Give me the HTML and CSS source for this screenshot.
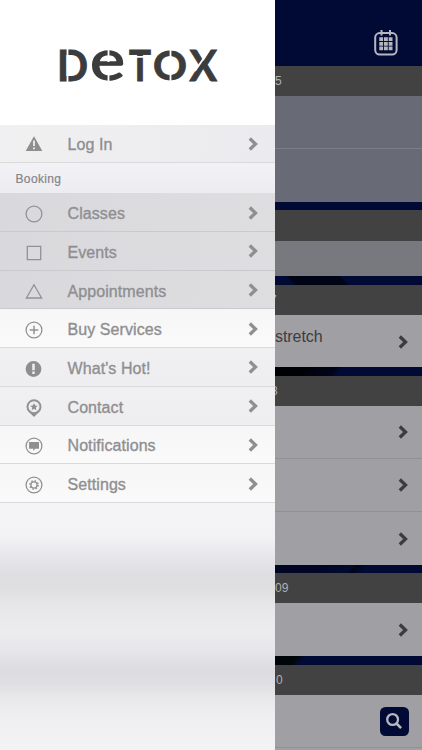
FILE: index.html
```html
<!DOCTYPE html>
<html lang="en">
<head>
<meta charset="utf-8">
<title>Detox</title>
<link rel="stylesheet" href="styles.css">
</head>
<body>
<svg class="defs" width="0" height="0">
  <symbol id="chev" viewBox="0 0 10 14"><path d="M1.8 1.5 7.5 7 1.8 12.5" fill="none" stroke="currentColor" stroke-width="3.3"/></symbol>
</svg>
<div class="app">
  <aside class="drawer">
    <div class="brand">
      <svg class="logo" width="160" height="34" viewBox="0 0 160 34">
        <g class="letters">
          <text x="-2" y="31.5" font-size="42" textLength="31" lengthAdjust="spacingAndGlyphs">D</text>
          <text class="wide-e" x="31" y="31" font-size="56" textLength="35" lengthAdjust="spacingAndGlyphs">e</text>
          <text x="70" y="31.5" font-size="42" textLength="22" lengthAdjust="spacingAndGlyphs">T</text>
          <text x="94" y="31" font-size="41" textLength="34" lengthAdjust="spacingAndGlyphs">O</text>
          <text x="130.5" y="31.5" font-size="42" textLength="27.5" lengthAdjust="spacingAndGlyphs">X</text>
        </g>
        <path class="cuts" d="M8.5 0V34M49.5 0V13M49.5 22V34M70 7.8H92M111.5 0V34M136 22 151 0"/>
      </svg>
    </div>
    <nav class="menu">
      <a class="item login">
        <svg class="icon" viewBox="0 0 18 18"><path class="solid" d="M9 1.2 17.3 16H.7Z"/><path d="M9 5.5V11M9 12.4V14.2" stroke="#eee" stroke-width="1.8"/></svg>
        <span class="label">Log In</span><svg class="chev"><use href="#chev"/></svg>
      </a>
      <div class="section">Booking</div>
      <a class="item shaded">
        <svg class="icon" viewBox="0 0 18 18"><circle cx="9" cy="9" r="7.9"/></svg>
        <span class="label">Classes</span><svg class="chev"><use href="#chev"/></svg>
      </a>
      <a class="item shaded">
        <svg class="icon" viewBox="0 0 18 18"><path d="M2.3 2.3H15.7V15.7H2.3Z"/></svg>
        <span class="label">Events</span><svg class="chev"><use href="#chev"/></svg>
      </a>
      <a class="item shaded">
        <svg class="icon" viewBox="0 0 18 18"><path d="M9 1.7 16.6 15H1.4Z"/></svg>
        <span class="label">Appointments</span><svg class="chev"><use href="#chev"/></svg>
      </a>
      <a class="item">
        <svg class="icon" viewBox="0 0 18 18"><circle cx="9" cy="9" r="7.9"/><path d="M9 4.7V13.3M4.7 9H13.3" stroke-width="1.5"/></svg>
        <span class="label">Buy Services</span><svg class="chev"><use href="#chev"/></svg>
      </a>
      <a class="item grey">
        <svg class="icon" viewBox="0 0 18 18"><circle class="solid" cx="8.5" cy="9" r="7.9"/><path d="M8.5 3.7V10.3M8.5 11.6V14" stroke="#eee" stroke-width="2.5"/></svg>
        <span class="label">What's Hot!</span><svg class="chev"><use href="#chev"/></svg>
      </a>
      <a class="item grey">
        <svg class="icon" viewBox="0 0 18 18"><path class="solid" d="M3.6 12.5 9 18.1 14.4 12.5Z"/><circle class="pin" cx="9" cy="7.7" r="6.5"/><path class="solid" d="m9 4 1.1 2.5 2.7.2-2.1 1.8.7 2.7L9 9.8l-2.4 1.4.7-2.7-2.1-1.8 2.7-.2Z"/></svg>
        <span class="label">Contact</span><svg class="chev"><use href="#chev"/></svg>
      </a>
      <a class="item">
        <svg class="icon" viewBox="0 0 18 18"><circle cx="9" cy="9" r="7.9"/><path class="solid" d="M4.1 5H14V11.8H10.2L8.3 14V11.8H4.1Z"/></svg>
        <span class="label">Notifications</span><svg class="chev"><use href="#chev"/></svg>
      </a>
      <a class="item">
        <svg class="icon" viewBox="0 0 18 18"><circle cx="9" cy="9" r="7.9"/><circle cx="9" cy="9" r="3.1"/><circle cx="9" cy="9" r="4.2" stroke-width="1.5" stroke-dasharray="1.5 1.8"/></svg>
        <span class="label">Settings</span><svg class="chev"><use href="#chev"/></svg>
      </a>
    </nav>
    <div class="haze"></div>
  </aside>
  <main class="schedule">
    <header class="topbar">
      <svg width="24" height="26" viewBox="0 0 24 26"><rect x="1.2" y="3.1" width="21.4" height="21.4" rx="4.5" fill="none" stroke="#b6b7be" stroke-width="2"/><path d="M7.5 0V5.5M16 0V5.5" stroke="#b6b7be" stroke-width="2"/><path d="M5.3 9.1H18.5M5.3 13.8H18.5M5.3 18.4H18.5" stroke="#b6b7be" stroke-width="3.7" stroke-dasharray="3.8 .9"/></svg>
    </header>
    <div class="date">5</div>
    <div class="row blue"></div>
    <div class="row blue last"></div>
    <div class="gap"></div>
    <div class="date"></div>
    <div class="row short"></div>
    <div class="gap shade-a"></div>
    <div class="date"><span class="seven">7</span></div>
    <div class="row only"><span class="class-name">stretch</span><svg class="chev"><use href="#chev"/></svg></div>
    <div class="gap shade-b"></div>
    <div class="date"><span class="eight">8</span></div>
    <div class="row"><svg class="chev"><use href="#chev"/></svg></div>
    <div class="row"><svg class="chev"><use href="#chev"/></svg></div>
    <div class="row last"><svg class="chev"><use href="#chev"/></svg></div>
    <div class="gap shade-c"></div>
    <div class="date"><span class="nine">09</span></div>
    <div class="row last"><svg class="chev"><use href="#chev"/></svg></div>
    <div class="gap shade-d"></div>
    <div class="date"><span class="ten">0</span></div>
    <div class="row end"><span class="search"><svg width="18" height="18" viewBox="0 0 18 18"><circle cx="7.6" cy="7.5" r="5.4" fill="none" stroke="#b6b7bf" stroke-width="2.3"/><path d="m11.5 11.5 4.6 4.6" stroke="#b6b7bf" stroke-width="2.6"/></svg></span></div>
    <div class="row"></div>
  </main>
</div>
</body>
</html>
```
FILE: styles.css
```css
* { box-sizing: border-box; }
body {
  margin: 0;
  font-family: "Liberation Sans", Arial, sans-serif;
}
.defs { display: block; }
.app {
  display: flex;
  width: 422px;
  height: 750px;
  overflow: hidden;
}
.drawer {
  width: 275px;
  display: flex;
  flex-direction: column;
  flex: none;
}
.brand {
  height: 125px;
  flex: none;
  padding: 49px 0 0 59px;
  background: #fff;
}
.logo { display: block; overflow: visible; }
.letters {
  font-family: Lato, sans-serif;
  font-weight: 700;
  fill: #3c3c3d;
  stroke: #3c3c3d;
  stroke-width: .9;
}
.wide-e { font-weight: 400; stroke-width: 1.3; }
.cuts { stroke: #fff; stroke-width: 1.8; fill: none; }

.menu { flex: none; color: #8f8f91; }
.item {
  display: flex;
  align-items: center;
  height: 38.7px;
  padding: 1px 17px 0 25px;
  border-bottom: 1px solid #dadadd;
  background: linear-gradient(#f6f6f7, #fafafb);
}
.item.login {
  height: 38px;
  padding-top: 0;
  background: linear-gradient(100deg, #f0f0f1, #ebebef);
}
.item.shaded {
  background: linear-gradient(100deg, #d9d9dd, #dedee0);
  border-color: #cacace;
}
.item.grey { background: linear-gradient(#f0f0f2, #eeeef0); }
.section {
  height: 30.4px;
  padding-left: 15.5px;
  line-height: 33px;
  font-size: 12px;
  letter-spacing: .35px;
  -webkit-text-stroke: .2px #858588;
  color: #858588;
  background: linear-gradient(#f2f2f6, #ededf1);
}
.icon {
  width: 18px;
  height: 18px;
  overflow: visible;
  margin-top: 3px;
  fill: none;
  stroke: #929294;
  stroke-width: 1.3;
}
.login .icon { margin-top: 0; }
.icon .solid { fill: #8e8e90; stroke: none; }
.icon .pin { fill: #eee; stroke-width: 2; }
.label {
  flex: 1;
  padding: 3px 0 0 24.5px;
  font-size: 16px;
  letter-spacing: .08px;
  -webkit-text-stroke: .35px #8f8f91;
}
.login .label { padding-top: 2px; }
.chev { width: 10px; height: 14px; }
.haze {
  flex: 1;
  background: linear-gradient(#f5f5f7 0, #f2f2f5 35px, #e8e8ec 52px, #dedee2 72px, #dedfe1 85px, #e8e8ea 106px, #ececee 130px, #e7e7eb 146px, #dddde1 166px, #dfdfe1 180px, #e8e8ea 194px, #efeff2 214px, #f3f3f5 248px);
}

.schedule {
  flex: 1;
  min-width: 0;
  overflow: hidden;
  background: #000a34;
}
.topbar {
  display: flex;
  justify-content: flex-end;
  height: 66px;
  padding: 30px 24px 0 0;
}
.date {
  height: 30.3px;
  overflow: hidden;
  line-height: 31px;
  font-size: 12px;
  color: #b0b0b0;
  background: #424242;
}
.seven { margin-left: -5px; }
.eight { margin-left: -4px; }
.nine { letter-spacing: .2px; }
.ten { margin-left: 1px; }
.row {
  display: flex;
  align-items: center;
  justify-content: flex-end;
  height: 52.9px;
  padding: 1px 14px 0 0;
  color: #3c3c3e;
  background: #a0a0a4;
  border-bottom: 1.5px solid #919195;
}
.row.last, .row.only { border-bottom: 0; }
.row.only { height: 52.3px; }
.row.blue { background: #686a76; border-color: #7b7d88; }
.row.short { height: 35.6px; background: #78797e; border-bottom: 0; }
.class-name {
  flex: 1;
  margin-top: -10px;
  font-size: 16px;
  letter-spacing: -.05px;
}
.gap { height: 8.4px; background: #000a34; }
.shade-a { background: linear-gradient(45deg, #000a34 12%, #000414 14%, #000414 46%, #000a34 48%); }
.shade-b { background: linear-gradient(135deg, #000104 15%, #000418 40%, #000a34 44%); }
.shade-c { background: linear-gradient(135deg, #000624 30%, #000a2e 50%, #000416 54%, #000a34 60%); }
.shade-d { background: linear-gradient(135deg, #000509 15%, #000a34 20%); }
.search {
  display: flex;
  align-items: center;
  justify-content: center;
  width: 29.5px;
  height: 29.5px;
  margin-right: -1px;
  border-radius: 5.5px;
  background: #000a34;
}
.row.end { height: 53px; }
```
